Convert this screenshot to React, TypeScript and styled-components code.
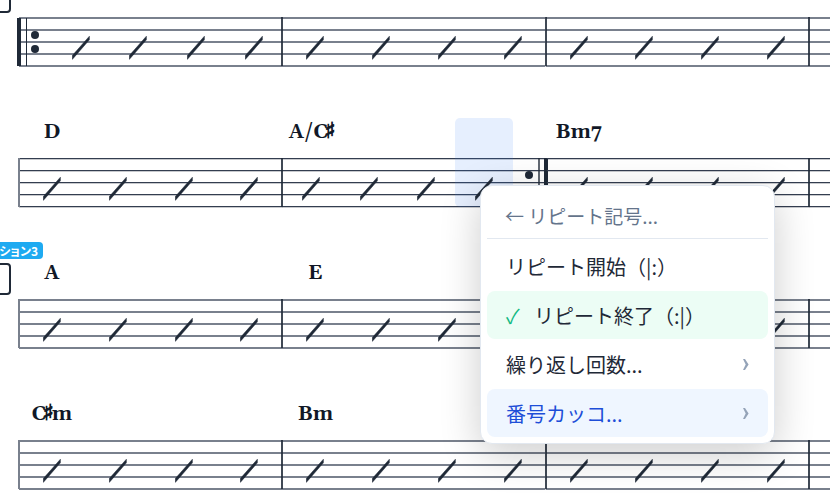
import React from "react";
import styled, { createGlobalStyle } from "styled-components";

const INK = "#1f2937";

const GlobalStyle = createGlobalStyle`
  *, *::before, *::after { box-sizing: border-box; }
  html, body, #root { height: 100%; }
  body {
    margin: 0;
    overflow: hidden;
    background: #fff;
    color: ${INK};
    font-family: "Noto Sans CJK JP", "Noto Sans", sans-serif;
  }
`;

const Page = styled.main`
  position: relative;
  display: flow-root;
  min-height: 100%;
`;

/* Scrolled so that the first system's chord line is above the window. */
const Score = styled.div`
  display: flex;
  flex-direction: column;
  gap: 52px;
  margin: -23px 0 0 19px;
`;

const System = styled.section`
  position: relative;
  display: grid;
  grid-template-columns: repeat(3, minmax(0, 1fr)) 21px;
`;

const Measure = styled.div`
  display: grid;
  grid-template-columns: minmax(0, 1fr);
  grid-template-rows: 40px 49px;
`;

const Staff = styled.svg`
  grid-area: 2 / 1;
  display: block;
  width: 100%;
  height: 49px;
  overflow: visible;
`;

const Beats = styled.div<{ $start?: boolean; $end?: boolean }>`
  grid-area: 1 / 1 / 3 / 2;
  display: grid;
  grid-template-columns: repeat(4, minmax(0, 1fr));
  padding-left: ${(p) => (p.$start ? 33 : 0)}px;
  padding-right: ${(p) => (p.$end ? 33 : 0)}px;
`;

const Beat = styled.div<{ $selected?: boolean }>`
  display: flex;
  flex-direction: column;
  align-items: center;
  border-radius: 5px;
  background: ${(p) => (p.$selected ? "rgba(59, 130, 246, 0.13)" : "transparent")};
`;

const Chord = styled.span`
  height: 40px;
  line-height: 28px;
  font-family: Georgia, Gelasio, "DejaVu Serif", serif;
  font-size: 20px;
  font-weight: 700;
  white-space: nowrap;
  color: #111827;
`;

const Sharp = styled.span`
  margin: 0 -2px 0 -3px;
  font-family: "DejaVu Sans", sans-serif;
  font-size: 22px;
  line-height: 0;
  -webkit-text-stroke: 1px currentColor;
`;

const Slash = styled.svg`
  display: block;
  width: 18px;
  height: 49px;
`;

const SectionFrame = styled.div`
  position: absolute;
  top: 4px;
  right: calc(100% + 8px);
  width: 32px;
  height: 32px;
  border: 2px solid ${INK};
  border-radius: 4px;
  background: #fff;
`;

const SectionTag = styled.span`
  position: absolute;
  top: -17px;
  right: calc(100% - 24px);
  padding: 0 5px;
  border-radius: 4px;
  background: #1eaaf1;
  color: #fff;
  font-size: 12px;
  font-weight: 700;
  font-feature-settings: "palt";
  line-height: 17px;
  white-space: nowrap;
`;

const Menu = styled.div`
  position: absolute;
  top: 185px;
  left: 480px;
  display: flex;
  flex-direction: column;
  gap: 1px;
  width: 295px;
  padding: 6px;
  border: 1px solid #e2e8f0;
  border-radius: 12px;
  background: #fff;
  box-shadow: 0 10px 40px rgba(0, 0, 0, 0.2);
`;

const MenuButton = styled.button`
  display: flex;
  align-items: center;
  width: 100%;
  border: 0;
  background: transparent;
  font-family: inherit;
  text-align: left;
  white-space: nowrap;
  cursor: pointer;
`;

const BackButton = styled(MenuButton)`
  height: 47px;
  margin-bottom: 2px;
  padding: 0 18px;
  border-bottom: 1px solid #e2e8f0;
  color: #64748b;
  font-size: 19px;
`;

const Item = styled(MenuButton)<{ $tone?: "checked" | "active" }>`
  height: 48px;
  padding: 0 19px;
  border-radius: 8px;
  color: ${(p) => (p.$tone === "active" ? "#1d4ed8" : INK)};
  background: ${(p) =>
    p.$tone === "active" ? "#eff6ff" : p.$tone === "checked" ? "#ecfdf5" : "transparent"};
  font-size: 20px;
`;

const Check = styled.span`
  width: 28px;
  color: #10b981;
  font-size: 20px;
`;

const ChevronIcon = styled.svg`
  width: 6px;
  height: 11px;
  margin-left: auto;
  fill: #94a3b8;
`;

type Bar = { chord?: string; start?: boolean; end?: boolean; selected?: number };
type Line = { tag?: string; frame?: boolean; crisp?: boolean; bars: Bar[] };

const lines: Line[] = [
  { frame: true, bars: [{ start: true }, {}, {}] },
  { crisp: true, bars: [{ chord: "D" }, { chord: "A/C♯", end: true, selected: 3 }, { chord: "Bm7" }] },
  { frame: true, tag: "セクション3", bars: [{ chord: "A" }, { chord: "E" }, {}] },
  { bars: [{ chord: "C♯m" }, { chord: "Bm" }, {}] },
];

const StaffLines = ({ crisp, first, bar }: { crisp?: boolean; first: boolean; bar?: Bar }) => (
  <Staff>
    {[0, 12, 24, 36, 48].map((y) => (
      <React.Fragment key={y}>
        <rect y={y} width="100%" height={crisp ? 1 : 2} fill={crisp ? "#333d50" : "#79808d"} />
        {crisp && <rect y={y + 1} width="100%" height={1} fill={INK} opacity={0.25} />}
      </React.Fragment>
    ))}
    {bar?.start ? (
      <>
        <rect x={-2} y={1} width={4} height={48} fill={INK} />
        <rect x={7} y={1} width={1} height={48} fill={INK} />
        <circle cx={16} cy={18} r={4} fill={INK} />
        <circle cx={16} cy={32} r={4} fill={INK} />
      </>
    ) : (
      <rect x={-1} width={2} height={49} fill={first ? "#79808d" : INK} opacity={first ? 1 : 0.85} />
    )}
  </Staff>
);

const RepeatEnd = styled.svg`
  grid-area: 2 / 1;
  justify-self: end;
  width: 24px;
  height: 49px;
  overflow: visible;
`;

const Chevron = () => (
  <ChevronIcon viewBox="0 0 6 11" aria-hidden="true">
    <path d="M0 0H2L5.6 5.5 2 11H0L2.7 5.5Z" />
  </ChevronIcon>
);

const ChordName = ({ name }: { name: string }) => (
  <>
    {name.split(/(♯)/).map((part, i) => (part === "♯" ? <Sharp key={i}>♯</Sharp> : part))}
  </>
);

export default function App() {
  return (
    <>
      <GlobalStyle />
      <Page>
        <Score>
          {lines.map((line, i) => (
            <System key={i}>
              {line.frame && <SectionFrame />}
              {line.tag && <SectionTag>{line.tag}</SectionTag>}
              {line.bars.map((bar, b) => (
                <Measure key={b}>
                  <StaffLines crisp={line.crisp} first={b === 0} bar={bar} />
                  <Beats $start={bar.start} $end={bar.end}>
                    {[0, 1, 2, 3].map((n) => (
                      <Beat key={n} $selected={bar.selected === n}>
                        <Chord>{n === 0 && bar.chord && <ChordName name={bar.chord} />}</Chord>
                        <Slash viewBox="0 0 18 49">
                          <path d="M0.3 38.6 17.4 19.2V22.8L0.3 42.4Z" fill={INK} stroke={INK} strokeWidth={0.5} />
                        </Slash>
                      </Beat>
                    ))}
                  </Beats>
                  {bar.end && (
                    <RepeatEnd viewBox="0 0 24 49">
                      <circle cx={7} cy={17} r={4} fill={INK} />
                      <circle cx={7} cy={32} r={4} fill={INK} />
                      <rect x={16} width={2} height={49} fill={INK} opacity={0.7} />
                      <rect x={22} width={4} height={49} fill={INK} />
                    </RepeatEnd>
                  )}
                </Measure>
              ))}
              <Measure>
                <StaffLines crisp={line.crisp} first={false} />
              </Measure>
            </System>
          ))}
        </Score>
        <Menu role="menu" aria-label="リピート記号">
          <BackButton role="menuitem">← リピート記号...</BackButton>
          <Item role="menuitem">リピート開始（|:）</Item>
          <Item role="menuitemcheckbox" aria-checked="true" $tone="checked">
            <Check>✓</Check>リピート終了（:|）
          </Item>
          <Item role="menuitem" aria-haspopup="menu">
            繰り返し回数...
            <Chevron />
          </Item>
          <Item role="menuitem" aria-haspopup="menu" $tone="active">
            番号カッコ...
            <Chevron />
          </Item>
        </Menu>
      </Page>
    </>
  );
}
